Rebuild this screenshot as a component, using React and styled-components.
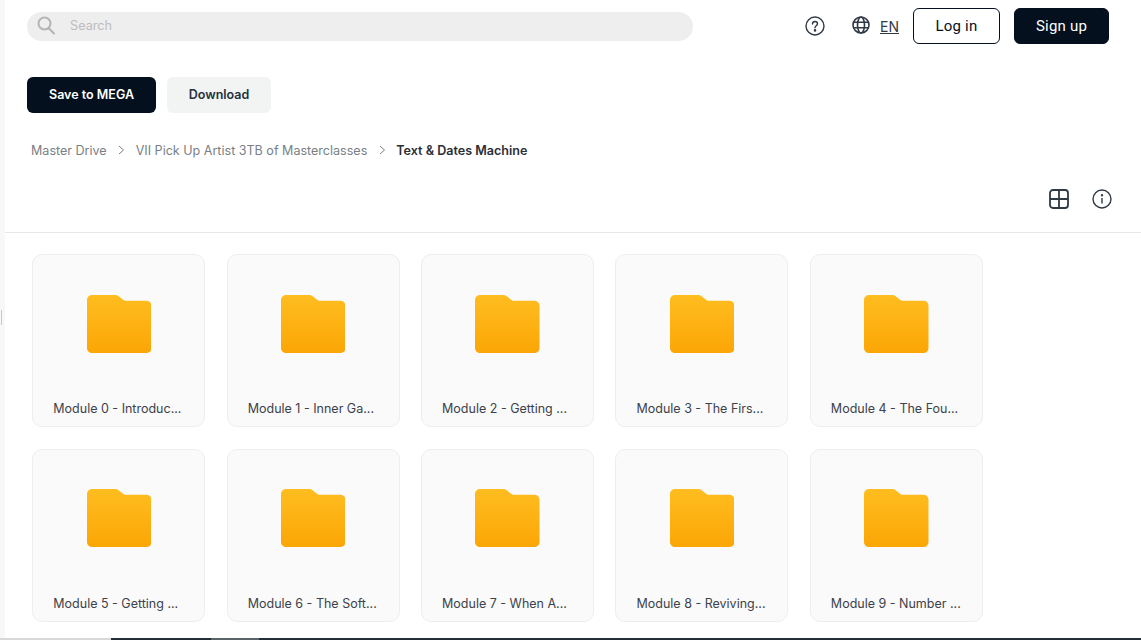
import React from 'react';
import styled, { createGlobalStyle } from 'styled-components';

const GlobalStyle = createGlobalStyle`
  html, body {
    margin: 0;
    height: 100%;
    overflow: hidden;
    background: #fff;
  }
  body {
    font-family: Inter, 'Liberation Sans', sans-serif;
    color: #04101e;
  }
`

const Page = styled.div`
  display: flex;
  flex-direction: column;
  width: 1141px;
  height: 640px;
`

const Body = styled.div`
  display: flex;
  flex: 1;
  min-height: 0;
`

const Rail = styled.div`
  flex: none;
  width: 5px;
  background: #f8f8f8;
  display: flex;
  align-items: flex-start;
  padding: 310px 0 0 1px;
  box-sizing: border-box;
`

const RailTick = styled.div`
  width: 1px;
  height: 15px;
  background: #c8c8c8;
`

const Main = styled.div`
  flex: 1;
  min-width: 0;
  display: flex;
  flex-direction: column;
`

const TopBar = styled.div`
  display: flex;
  align-items: center;
  height: 36px;
  margin-top: 8px;
  padding: 0 32px 0 22px;
`

const SearchBox = styled.div`
  display: flex;
  align-items: center;
  width: 666px;
  height: 29px;
  border-radius: 15px;
  background: #eeeeee;
  padding: 0 0 1px 10px;
  box-sizing: border-box;
`

const SearchText = styled.span`
  margin-left: 15px;
  font-size: 12.700px;
  color: #bdbdbd;
`

const TopActions = styled.div`
  display: flex;
  align-items: center;
  margin-left: auto;
`

const HelpIcon = styled.svg`
  display: block;
  margin: -1px 27px 0 0;
`

const GlobeIcon = styled.svg`
  display: block;
  margin: -2px 10px 0 0;
`

const Lang = styled.a`
  font-size: 14px;
  color: #303a45;
  text-decoration: underline;
  margin-right: 14px;
`

const LoginButton = styled.button`
  width: 87px;
  height: 36px;
  box-sizing: border-box;
  border: 1px solid #04101e;
  border-radius: 6px;
  background: #fff;
  color: #04101e;
  font: 400 15px Roboto, sans-serif;
  letter-spacing: 0.2px;
  padding: 0;
  margin-right: 14px;
`

const SignupButton = styled(LoginButton)`
  width: 95px;
  background: #04101e;
  color: #fff;
  margin-right: 0;
`

const ActionRow = styled.div`
  display: flex;
  gap: 11px;
  padding: 33px 0 0 22px;
`

const SaveButton = styled.button`
  height: 36px;
  width: 129px;
  border: 0;
  border-radius: 6px;
  background: #04101e;
  color: #fff;
  font: 600 12.500px Inter, sans-serif;
  padding: 0 0 2px;
`

const DownloadButton = styled(SaveButton)`
  width: 104px;
  background: #f2f3f3;
  color: #27313c;
`

const Crumbs = styled.div`
  display: flex;
  align-items: center;
  height: 18px;
  margin: 28px 0 0 26px;
  font-size: 12.550px;
`

const Crumb = styled.span`
  font-weight: ${props => props.current ? 600 : 400};
  color: ${props => props.current ? '#2b2f36' : '#7a7f86'};
`

const CrumbArrow = styled.svg`
  display: block;
  margin: 0 10.500px 0 11.500px;
`

const ViewBar = styled.div`
  display: flex;
  justify-content: flex-end;
  align-items: center;
  gap: 23px;
  height: 65px;
  padding-right: 29px;
  box-sizing: border-box;
  margin-top: 9px;
  border-bottom: 1px solid #e8e8e8;
`

const ViewIcon = styled.svg`
  display: block;
  margin-top: -2px;
`

const Grid = styled.div`
  display: grid;
  grid-template-columns: repeat(5, 172.900px);
  column-gap: 21.500px;
  row-gap: 21.600px;
  padding: 21px 0 0 27.300px;
`

const Card = styled.div`
  display: flex;
  flex-direction: column;
  align-items: center;
  height: 173px;
  box-sizing: border-box;
  border: 1px solid #eeeeee;
  border-radius: 10px;
  background: #fafafa;
`

const FolderIcon = styled.svg`
  display: block;
  margin: 39.700px 0 0 .2px;
`

const CardName = styled.div`
  align-self: stretch;
  margin-top: auto;
  padding: 0 0 9px 20px;
  font-size: 12.500px;
  line-height: 16px;
  color: #3c424a;
  white-space: nowrap;
`

const TaskBar = styled.div`
  flex: none;
  height: 2px;
  display: grid;
  grid-template-columns: 111px 100px 48px 1fr;
  background: #243038;
`

const TaskSegment = styled.div`
  background: ${props => props.tone};
`

const folders = [
  'Module 0 - Introduc...',
  'Module 1 - Inner Ga...',
  'Module 2 - Getting ...',
  'Module 3 - The Firs...',
  'Module 4 - The Fou...',
  'Module 5 - Getting ...',
  'Module 6 - The Soft...',
  'Module 7 - When A...',
  'Module 8 - Reviving...',
  'Module 9 - Number ...',
]

const Folder = ({ id }) => (
  <FolderIcon width="64.500" height="58" viewBox="0 0 65 58" preserveAspectRatio="none">
    <defs>
      <linearGradient id={id} x1="0" y1="0" x2="0" y2="1">
        <stop offset="0" stopColor="#ffbd20" />
        <stop offset="1" stopColor="#fba605" />
      </linearGradient>
    </defs>
    <path
      d="M5 0H28C30 0 31.300 .6 32.600 1.700L36 4.400C37 5.300 38 5.800 39.500 5.800H60C62.800 5.800 65 8 65 10.800V53C65 55.800 62.800 58 60 58H5C2.200 58 0 55.800 0 53V5C0 2.200 2.200 0 5 0Z"
      fill={`url(#${id})`}
    />
  </FolderIcon>
)

const Chevron = () => (
  <CrumbArrow width="7" height="10" viewBox="0 0 7 10" fill="none" stroke="#7a7f86" strokeWidth="1">
    <path d="M1 1L5.500 5L1 9" />
  </CrumbArrow>
)

const App = () => (
  <Page>
    <GlobalStyle />
    <Body>
      <Rail><RailTick /></Rail>
      <Main>
        <TopBar>
          <SearchBox>
            <svg width="18" height="19" viewBox="0 0 18 19" fill="none" stroke="#b4b4b4" strokeWidth="2">
              <circle cx="7.500" cy="7.500" r="6" />
              <path d="M12 12.500L17 17.500" strokeLinecap="round" />
            </svg>
            <SearchText>Search</SearchText>
          </SearchBox>
          <TopActions>
            <HelpIcon width="20" height="20" viewBox="0 0 20 20" fill="none" stroke="#303a45" strokeWidth="1.400">
              <circle cx="10" cy="10" r="9" />
              <path d="M7.500 8C7.500 6.500 8.600 5.500 10 5.500C11.400 5.500 12.500 6.500 12.500 7.800C12.500 9.600 10 9.800 10 11.800" strokeLinecap="round" />
              <circle cx="10" cy="14.400" r=".6" fill="#303a45" />
            </HelpIcon>
            <GlobeIcon width="18" height="18" viewBox="0 0 18 18" fill="none" stroke="#303a45" strokeWidth="1.600">
              <circle cx="9" cy="9" r="8" />
              <ellipse cx="9" cy="9" rx="3.500" ry="8" />
              <path d="M1.500 6.300H16.500M1.500 11.700H16.500" />
            </GlobeIcon>
            <Lang>EN</Lang>
            <LoginButton>Log in</LoginButton>
            <SignupButton>Sign up</SignupButton>
          </TopActions>
        </TopBar>
        <ActionRow>
          <SaveButton>Save to MEGA</SaveButton>
          <DownloadButton>Download</DownloadButton>
        </ActionRow>
        <Crumbs>
          <Crumb>Master Drive</Crumb>
          <Chevron />
          <Crumb>VII Pick Up Artist 3TB of Masterclasses</Crumb>
          <Chevron />
          <Crumb current>Text &amp; Dates Machine</Crumb>
        </Crumbs>
        <ViewBar>
          <ViewIcon width="20" height="20" viewBox="0 0 20 20" fill="none" stroke="#303a45" strokeWidth="1.800">
            <rect x="1" y="1" width="18" height="18" rx="3" />
            <path d="M10 1V19M1 10H19" />
          </ViewIcon>
          <ViewIcon width="20" height="20" viewBox="0 0 20 20" fill="none" stroke="#303a45" strokeWidth="1.400">
            <circle cx="10" cy="10" r="9" />
            <path d="M10 9V14.500" />
            <circle cx="10" cy="6.200" r=".5" fill="#303a45" />
          </ViewIcon>
        </ViewBar>
        <Grid>
          {folders.map((name, i) => (
            <Card key={name}>
              <Folder id={`folder-${i}`} />
              <CardName>{name}</CardName>
            </Card>
          ))}
        </Grid>
      </Main>
    </Body>
    <TaskBar>
      <TaskSegment tone="#d8d8d8" />
      <TaskSegment tone="#243038" />
      <TaskSegment tone="#5a6468" />
      <TaskSegment tone="#243038" />
    </TaskBar>
  </Page>
)

export default App
